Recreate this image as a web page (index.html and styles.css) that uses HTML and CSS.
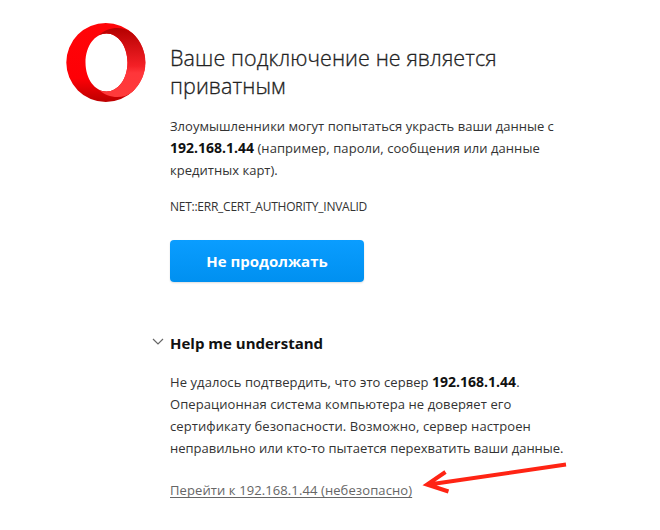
FILE: index.html
```html
<!DOCTYPE html>
<html lang="ru">
<head>
<meta charset="utf-8">
<title>Ошибка конфиденциальности</title>
<link rel="stylesheet" href="styles.css">
</head>
<body>
<main class="page">
  <svg class="logo" viewBox="0 0 80 80" aria-hidden="true">
    <defs>
      <linearGradient id="ring" x1="0" y1="0" x2="0" y2="1"><stop offset="0" stop-color="#ff0508"/><stop offset=".7" stop-color="#fe0006"/><stop offset="1" stop-color="#bc0000"/></linearGradient>
      <linearGradient id="side" x1="0" y1="0" x2="0" y2="1"><stop offset="0" stop-color="#b40000"/><stop offset=".55" stop-color="#f42026"/><stop offset=".65" stop-color="#ff363a"/><stop offset="1" stop-color="#ff3b3b"/></linearGradient>
    </defs>
    <path fill="url(#ring)" fill-rule="evenodd" d="M39.800 0a39.500 39.500 0 1 0 0 79a39.500 39.500 0 0 0 0-79zM40.500 10.500C52 10.500 61.500 23 61.500 39.500S52 68.500 40.500 68.500S19.500 56 19.500 39.500S29 10.500 40.500 10.500z"/>
    <path fill="url(#side)" d="M33 12C42 4 56 2 66.300 10.100A39.500 39.500 0 0 1 66.300 68.900C56 77 42 75 33 67C35.500 68 38 68.500 40.500 68.500C52 68.500 61.500 56 61.500 39.500S52 10.500 40.500 10.500C38 10.500 35.500 11 33 12z"/>
  </svg>
  <section class="content">
    <h1>Ваше подключение не является<br>приватным</h1>
    <p class="warning">Злоумышленники могут попытаться украсть ваши данные с<br><span class="w2"><b>192.168.1.44</b> (например, пароли, сообщения или данные</span><br><span class="w3">кредитных карт).</span></p>
    <p class="code">NET::ERR_CERT_AUTHORITY_INVALID</p>
    <button class="back" type="button">Не продолжать</button>
    <h2><svg class="chevron" viewBox="0 0 12 8" aria-hidden="true"><path d="M1 1l5 5 5-5"/></svg><span>Help me understand</span></h2>
    <p class="details"><span class="d1">Не удалось подтвердить, что это сервер <b>192.168.1.44</b>.</span><br><span class="d2">Операционная система компьютера не доверяет его</span><br><span class="d3">сертификату безопасности. Возможно, сервер настроен</span><br>неправильно или кто-то пытается перехватить ваши данные.</p>
    <a class="proceed" href="#">Перейти к 192.168.1.44 (небезопасно)</a>
  </section>
  <svg class="arrow" viewBox="0 0 150 40" aria-hidden="true"><path d="M146 6.500L9 26.500M25.500 14L7 26.500L28.500 33.500"/></svg>
</main>
</body>
</html>
```

FILE: styles.css
```css
* { box-sizing: border-box; }
body { margin: 0; background: #fff; color: #333; font-family: "Open Sans", "Noto Sans", sans-serif; }
.page { position: relative; display: flex; align-items: flex-start; width: 660px; height: 530px; padding: 23px 0 0 66px; overflow: hidden; }
.logo { width: 80px; height: 80px; flex: none; }
.content { width: 420px; margin: 21px 0 0 24px; white-space: nowrap; }
h1 { margin: 0; font-size: 21.5px; line-height: 28px; font-weight: 300; letter-spacing: .08px; color: #222; -webkit-text-stroke: .3px #222; }
p { margin: 0; }
.warning, .details { font-size: 13px; line-height: 22px; font-weight: 400; }
.warning { margin-top: 15px; letter-spacing: .02px; }
b { color: #111; font-size: 14px; line-height: 1; font-weight: 700; letter-spacing: 0; }
.w2 { letter-spacing: .06px; }
.w3 { letter-spacing: .02px; }
.d1 { letter-spacing: .08px; }
.d2 { letter-spacing: .08px; }
.d3 { letter-spacing: .09px; }
.code { margin-top: 15px; font-size: 12px; line-height: 22px; letter-spacing: -.25px; }
.back { display: block; width: 194px; height: 42px; margin-top: 22px; padding: 0; border: 0; border-radius: 4px; background: linear-gradient(#0a9dff, #0090f0); color: #fff; font: 700 15px/42px "Open Sans", sans-serif; box-shadow: 0 1px 2px #0002; }
h2 { display: flex; margin: 50px 0 0 -18px; font-size: 15px; line-height: 22px; font-weight: 700; color: #111; }
.chevron { width: 12px; height: 8px; margin: 5.5px 6px 0 0; fill: none; stroke: #666; stroke-width: 1.2; }
.details { margin-top: 17px; }
.proceed { display: inline-block; margin-top: 20px; font-size: 13px; line-height: 22px; letter-spacing: .1px; color: #666; text-underline-offset: 2px; text-decoration-thickness: 1px; text-decoration-skip-ink: none; }
.arrow { position: absolute; left: 420px; top: 458px; width: 150px; height: 40px; fill: none; stroke: #ff2414; stroke-width: 4; }
```
